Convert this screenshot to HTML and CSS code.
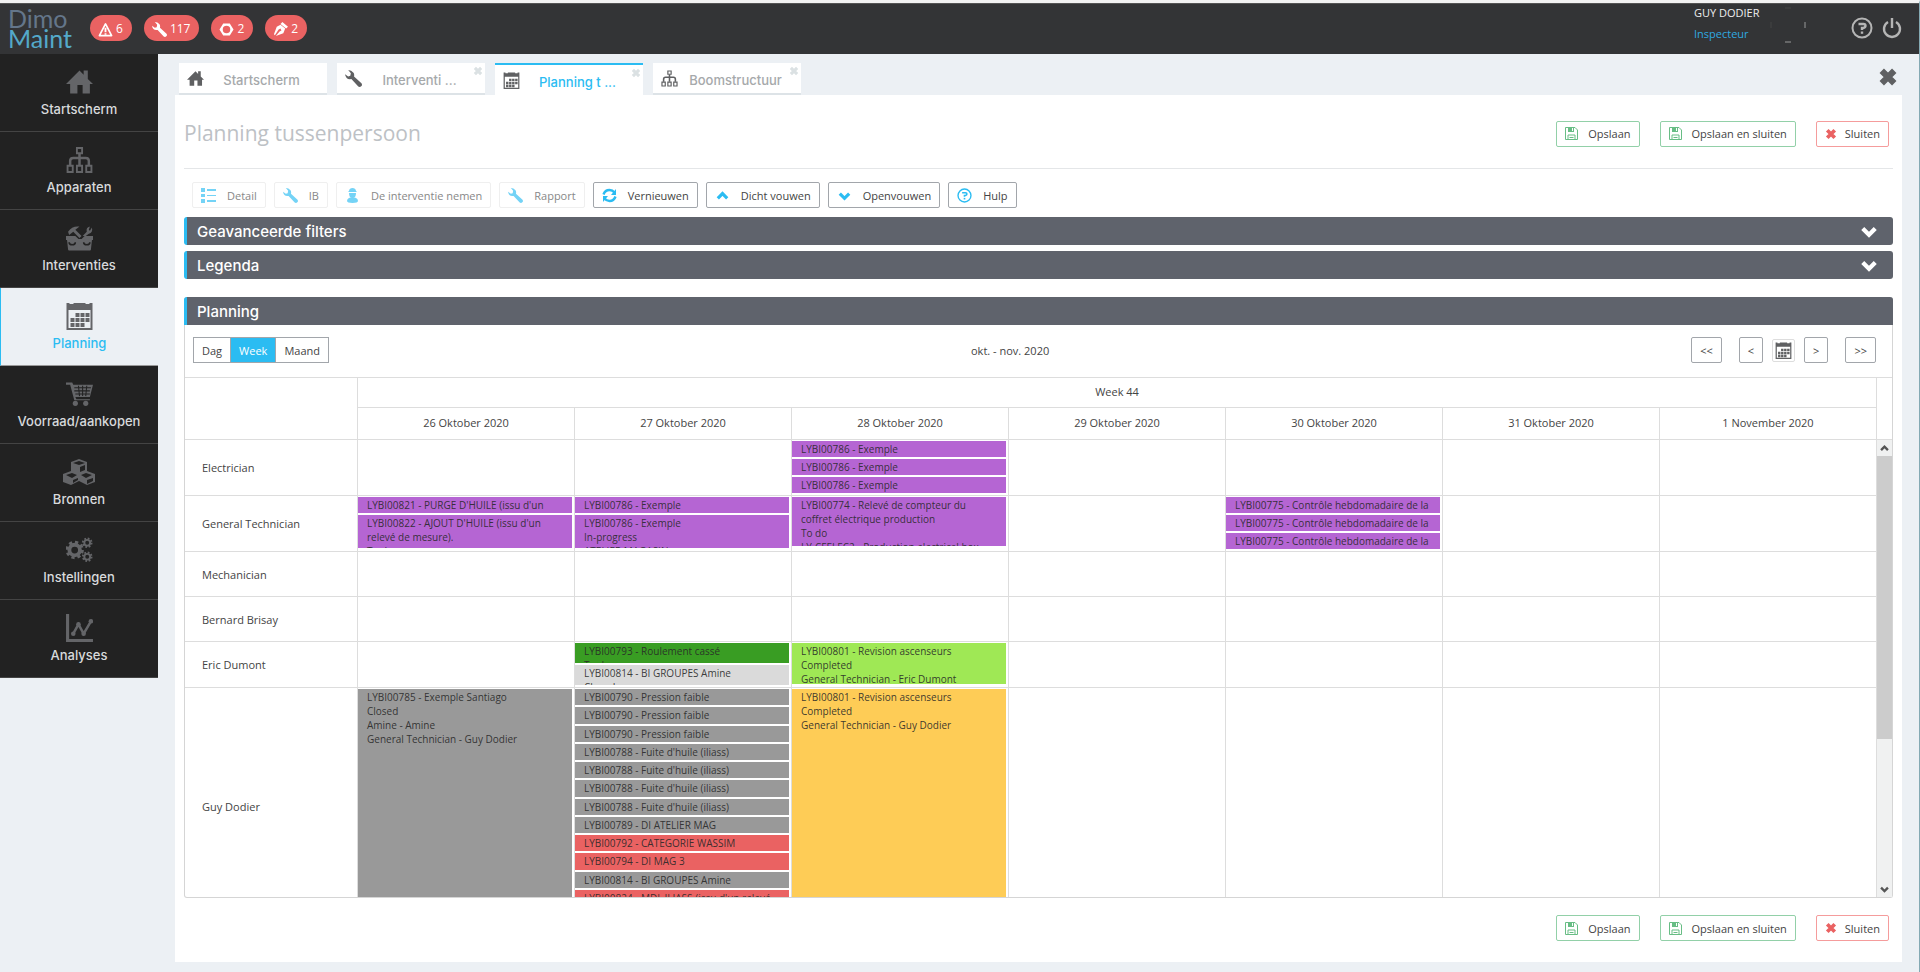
FILE: index.html
```html
<!DOCTYPE html>
<html lang="nl">
<head>
    <meta charset="UTF-8">
    <meta name="viewport" content="width=device-width, initial-scale=1.0">
    <title>DimoMaint - Planning tussenpersoon</title>
    <link rel="stylesheet" href="styles.css">
</head>
<body>

    <!-- Icon set -->
    <svg class="icon-set" aria-hidden="true">
        <symbol id="i-home" viewBox="0 0 26 24"><path d="M13 1 0 14h4v9h7v-8h5v8h7v-9h3l-5-5V1h-4v4z"/></symbol>
        <symbol id="i-tree" viewBox="0 0 26 26"><path d="M13 7v11M4 18v-4q0-3 3-3h12q3 0 3 3v4" fill="none" stroke="currentColor" stroke-width="2.4"/><path d="M10.500 1.500h5v5h-5zM1.500 18.500h5v6h-5zM10.500 18.500h5v6h-5zM19.500 18.500h5v6h-5z" fill="none" stroke="currentColor" stroke-width="1.800"/></symbol>
        <symbol id="i-toolbox" viewBox="0 0 26 24"><path d="M0 10h9l3 3h3l3-3h8v4h-1l-1 9q0 1-1 1H3q-1 0-1-1l-1-9H0z"/><path d="M3 16q0 2.500 3 2.500T9 16M17 16q0 2.500 3 2.500t3-2.500" fill="none" stroke="#222" stroke-width="1.500"/><path d="M2 6q4-6 11-5l-4 3 6 6-2 2-6-6-4 3zM25 2q1 5-3 6l-3 2h-3l4-4q-1-4 3-5l-1 3 1 1z"/></symbol>
        <symbol id="i-calendar" viewBox="0 0 26 28"><path d="M0 1h3v1h4V1h12v1h4V1h3v27H0zM2 8v18h22V8z" fill-rule="evenodd"/><path d="M9 11h4v4H9zM14 11h4v4h-4zM19 11h4v4h-4zM4 16h4v4H4zM9 16h4v4H9zM14 16h4v4h-4zM19 16h4v4h-4zM4 21h4v4H4zM9 21h4v4H9zM14 21h4v4h-4z"/></symbol>
        <symbol id="i-cart" viewBox="0 0 26 24"><path d="M0 1h6l1 2h19l-3 12H9l1 2h13v1H8L4 3H0z"/><path d="M8 6h16M8 9h15M9 12h14M12 4l1 10M16 4v10M20 4l-1 10" stroke="#222" stroke-width="1"/><circle cx="9" cy="21" r="2.500"/><circle cx="19" cy="21" r="2.500"/></symbol>
        <symbol id="i-cubes" viewBox="0 0 32 26"><path d="M16 0 24 3v9l8 3v8l-8 3-8-4-8 4-8-3v-8l8-3V3z"/><path d="m10 4 6-2 6 2-6 2zM3 16l6-2 5 2-5 3zM18 16l5-2 6 2-6 3zM17 8l5-2v5l-5 2zM10 21l5-2v2l-5 3zM24 21l6-2v3l-6 3z" fill="#222"/></symbol>
        <symbol id="i-gears" viewBox="0 0 28 26"><circle cx="9" cy="13" r="5.500" fill="none" stroke="currentColor" stroke-width="4"/><circle cx="9" cy="13" r="8" fill="none" stroke="currentColor" stroke-width="3" stroke-dasharray="3.300 3"/><circle cx="22" cy="5.500" r="3" fill="none" stroke="currentColor" stroke-width="2"/><circle cx="22" cy="5.500" r="4.500" fill="none" stroke="currentColor" stroke-width="2" stroke-dasharray="1.800 1.730"/><circle cx="22" cy="20" r="3" fill="none" stroke="currentColor" stroke-width="2"/><circle cx="22" cy="20" r="4.500" fill="none" stroke="currentColor" stroke-width="2" stroke-dasharray="1.800 1.730"/></symbol>
        <symbol id="i-chart" viewBox="0 0 26 27"><path d="M0 0h3v24h23v3H0z"/><path d="m7 19 5-9 5 9 7-12" fill="none" stroke="currentColor" stroke-width="2.400"/><circle cx="7" cy="19" r="2.200"/><circle cx="12" cy="10" r="2.200"/><circle cx="17" cy="19" r="2.200"/><circle cx="24" cy="7" r="2.200"/></symbol>
        <symbol id="i-warning" viewBox="0 0 16 16"><path d="m8 2 6.500 12.500h-13z" fill="none" stroke="currentColor" stroke-width="1.800" stroke-linejoin="round"/><path d="M7 6h2v5H7zM7 12h2v1.500H7z"/></symbol>
        <symbol id="i-wrench" viewBox="0 0 16 16"><path d="M3 0q3 0 5 2.500 1 1.500.5 3.500l7 6.500q1 1.500 0 2.500-1.500 1.500-3 .500L6 8.500Q1 9.500 0 4l3 2 2-.500L5.500 3z"/></symbol>
        <symbol id="i-nut" viewBox="0 0 16 16"><path d="M4.500 1.500h7L15.500 8l-4 6.500h-7L.5 8zM8 4a4 4 0 1 0 0 8 4 4 0 0 0 0-8z" fill-rule="evenodd"/></symbol>
        <symbol id="i-pen" viewBox="0 0 16 16"><path d="M10 0 16 5l-2 2-6-5zM8 3l5 4-2 5-8 3 4-5 2-1-1-2-2 1-4 6-1-1 3-8z"/></symbol>
        <symbol id="i-help" viewBox="0 0 22 22"><circle cx="11" cy="11" r="9.500" fill="none" stroke="currentColor" stroke-width="2"/><path d="M7.500 7h5q2 0 2 1.700T12 11h-1v2" fill="none" stroke="currentColor" stroke-width="2.400"/><path d="M9.800 14.500h2.400v2.300H9.800z"/></symbol>
        <symbol id="i-power" viewBox="0 0 20 22"><path d="M6 5a8 8 0 1 0 8 0" fill="none" stroke="currentColor" stroke-width="2.400"/><path d="M8.800 1h2.400v10H8.800z"/></symbol>
        <symbol id="i-close" viewBox="0 0 16 16"><path d="m3 3 10 10M13 3 3 13" stroke="currentColor" stroke-width="5"/></symbol>
        <symbol id="i-list" viewBox="0 0 15 15"><path d="M0 0h4v4H0zM0 6h4v3H0zM0 11h4v4H0zM6 1h9v2H6zM6 7h9v1H6zM6 12h9v2H6z"/></symbol>
        <symbol id="i-user" viewBox="0 0 15 15"><path d="M4 3c0-4 7-4 7 0l1 1H3zM4 5h7c0 3-1 5-3.500 5S4 8 4 5z"/><path d="M2 13c0-2 2-3.500 4-3.500h3c2 0 4 1.500 4 3.500 0 1-2 2-5.500 2S2 14 2 13z"/></symbol>
        <symbol id="i-refresh" viewBox="0 0 15 15"><path d="M1.500 6.500Q3 2 7.500 2q3 0 5 2.500M13.500 8.500Q12 13 7.500 13q-3 0-5-2.500" fill="none" stroke="currentColor" stroke-width="2.400"/><path d="M14 1v6H9zM1 14V8h5z"/></symbol>
        <symbol id="i-up" viewBox="0 0 16 16"><path d="m3 11 5-5 5 5" fill="none" stroke="currentColor" stroke-width="3.400"/></symbol>
        <symbol id="i-down" viewBox="0 0 16 16"><path d="m3 6 5 5 5-5" fill="none" stroke="currentColor" stroke-width="3.400"/></symbol>
        <symbol id="i-save" viewBox="0 0 13 13"><path d="M.5.5H10l2.500 2.500v9.500H.5zM3 12.500V8h7v4.500M4.500 10.500h4" fill="none" stroke="currentColor"/><path d="M3 0h6v5H3zm4 1v3h1V1z" fill-rule="evenodd"/></symbol>
    </svg>

    <header class="topbar">
        <a class="logo" href="#"><span class="logo-dimo">Dimo</span><span class="logo-maint">Maint</span></a>
        <div class="badges">
            <a class="badge" href="#"><svg><use href="#i-warning"/></svg>6</a>
            <a class="badge" href="#"><svg><use href="#i-wrench"/></svg>117</a>
            <a class="badge" href="#"><svg><use href="#i-nut"/></svg>2</a>
            <a class="badge" href="#"><svg><use href="#i-pen"/></svg>2</a>
        </div>
        <div class="user">
            <span>GUY DODIER</span>
            <a href="#">Inspecteur</a>
        </div>
        <svg class="avatar" viewBox="0 0 36 36" aria-hidden="true"><path d="M1 15v6M15 1h6" stroke="#444"/><path d="M35 15v6M15 35h6" stroke="#999"/></svg>
        <button class="top-btn" aria-label="Hulp"><svg><use href="#i-help"/></svg></button>
        <button class="top-btn" aria-label="Afmelden"><svg><use href="#i-power"/></svg></button>
    </header>

    <div class="layout">
        <nav class="sidebar">
            <a href="#"><svg><use href="#i-home"/></svg>Startscherm</a>
            <a href="#"><svg><use href="#i-tree"/></svg>Apparaten</a>
            <a href="#"><svg><use href="#i-toolbox"/></svg>Interventies</a>
            <a href="#" class="active"><svg><use href="#i-calendar"/></svg>Planning</a>
            <a href="#"><svg><use href="#i-cart"/></svg>Voorraad/aankopen</a>
            <a href="#"><svg class="wide"><use href="#i-cubes"/></svg>Bronnen</a>
            <a href="#"><svg><use href="#i-gears"/></svg>Instellingen</a>
            <a href="#"><svg><use href="#i-chart"/></svg>Analyses</a>
        </nav>

        <div class="workspace">
            <div class="tabs">
                <div class="tab"><svg><use href="#i-home"/></svg><a href="#">Startscherm</a></div>
                <div class="tab"><svg><use href="#i-wrench"/></svg><a href="#">Interventi ...</a><button class="tab-close" aria-label="Tab sluiten"><svg><use href="#i-close"/></svg></button></div>
                <div class="tab active"><svg><use href="#i-calendar"/></svg><a href="#">Planning t ...</a><button class="tab-close" aria-label="Tab sluiten"><svg><use href="#i-close"/></svg></button></div>
                <div class="tab"><svg><use href="#i-tree"/></svg><a href="#">Boomstructuur</a><button class="tab-close" aria-label="Tab sluiten"><svg><use href="#i-close"/></svg></button></div>
                <button class="close-all" aria-label="Alles sluiten"><svg><use href="#i-close"/></svg></button>
            </div>

            <main class="page">
                <div class="page-head">
                    <h1>Planning tussenpersoon</h1>
                    <div class="actions">
                        <button class="btn save"><svg><use href="#i-save"/></svg>Opslaan</button>
                        <button class="btn save"><svg><use href="#i-save"/></svg>Opslaan en sluiten</button>
                        <button class="btn cancel"><svg><use href="#i-close"/></svg>Sluiten</button>
                    </div>
                </div>

                <div class="toolbar">
                    <button class="btn" disabled><svg><use href="#i-list"/></svg>Detail</button>
                    <button class="btn" disabled><svg><use href="#i-wrench"/></svg>IB</button>
                    <button class="btn" disabled><svg><use href="#i-user"/></svg>De interventie nemen</button>
                    <button class="btn" disabled><svg><use href="#i-wrench"/></svg>Rapport</button>
                    <button class="btn"><svg><use href="#i-refresh"/></svg>Vernieuwen</button>
                    <button class="btn"><svg><use href="#i-up"/></svg>Dicht vouwen</button>
                    <button class="btn"><svg><use href="#i-down"/></svg>Openvouwen</button>
                    <button class="btn"><svg><use href="#i-help"/></svg>Hulp</button>
                </div>

                <button class="panel-title">Geavanceerde filters<svg><use href="#i-down"/></svg></button>
                <button class="panel-title">Legenda<svg><use href="#i-down"/></svg></button>

                <section class="planning">
                    <h2 class="panel-title">Planning</h2>
                    <div class="planning-bar">
                        <div class="views">
                            <button>Dag</button>
                            <button class="active">Week</button>
                            <button>Maand</button>
                        </div>
                        <span class="period">okt. - nov. 2020</span>
                        <div class="nav-dates">
                            <button class="btn first">&lt;&lt;</button>
                            <button class="btn">&lt;</button>
                            <button class="pick" aria-label="Datum kiezen"><svg><use href="#i-calendar"/></svg></button>
                            <button class="btn">&gt;</button>
                            <button class="btn last">&gt;&gt;</button>
                        </div>
                    </div>

                    <div class="schedule-head">
                        <table class="schedule">
                            <colgroup><col class="col-name"><col span="7"></colgroup>
                            <thead>
                                <tr>
                                    <td rowspan="2"></td>
                                    <th colspan="7" scope="colgroup">Week 44</th>
                                </tr>
                                <tr>
                                    <th scope="col">26 Oktober 2020</th>
                                    <th scope="col">27 Oktober 2020</th>
                                    <th scope="col">28 Oktober 2020</th>
                                    <th scope="col">29 Oktober 2020</th>
                                    <th scope="col">30 Oktober 2020</th>
                                    <th scope="col">31 Oktober 2020</th>
                                    <th scope="col">1 November 2020</th>
                                </tr>
                            </thead>
                        </table>
                    </div>

                    <div class="schedule-body">
                        <div class="schedule-view">
                            <table class="schedule">
                                <colgroup><col class="col-name"><col span="7"></colgroup>
                                <tbody>
                                    <tr class="row-large">
                                        <th scope="row">Electrician</th>
                                        <td></td>
                                        <td></td>
                                        <td>
                                            <div class="event purple">LYBI00786 - Exemple</div>
                                            <div class="event purple">LYBI00786 - Exemple</div>
                                            <div class="event purple">LYBI00786 - Exemple</div>
                                        </td>
                                        <td></td>
                                        <td></td>
                                        <td></td>
                                        <td></td>
                                    </tr>
                                    <tr class="row-large">
                                        <th scope="row">General Technician</th>
                                        <td>
                                            <div class="event purple">LYBI00821 - PURGE D'HUILE (issu d'un</div>
                                            <div class="event purple double">LYBI00822 - AJOUT D'HUILE (issu d'un<br>relevé de mesure).<br>To do</div>
                                        </td>
                                        <td>
                                            <div class="event purple">LYBI00786 - Exemple</div>
                                            <div class="event purple double">LYBI00786 - Exemple<br>In-progress<br>ATELIER MAGASIN</div>
                                        </td>
                                        <td>
                                            <div class="event purple triple">LYBI00774 - Relevé de compteur du<br>coffret électrique production<br>To do<br>LY-CFELEC2 - Production electrical box</div>
                                        </td>
                                        <td></td>
                                        <td>
                                            <div class="event purple">LYBI00775 - Contrôle hebdomadaire de la</div>
                                            <div class="event purple">LYBI00775 - Contrôle hebdomadaire de la</div>
                                            <div class="event purple">LYBI00775 - Contrôle hebdomadaire de la</div>
                                        </td>
                                        <td></td>
                                        <td></td>
                                    </tr>
                                    <tr>
                                        <th scope="row">Mechanician</th>
                                        <td></td><td></td><td></td><td></td><td></td><td></td><td></td>
                                    </tr>
                                    <tr>
                                        <th scope="row">Bernard Brisay</th>
                                        <td></td><td></td><td></td><td></td><td></td><td></td><td></td>
                                    </tr>
                                    <tr>
                                        <th scope="row">Eric Dumont</th>
                                        <td></td>
                                        <td>
                                            <div class="event green half">LYBI00793 - Roulement cassé<br>To do</div>
                                            <div class="event light half">LYBI00814 - BI GROUPES Amine<br>Closed</div>
                                        </td>
                                        <td>
                                            <div class="event lime whole">LYBI00801 - Revision ascenseurs<br>Completed<br>General Technician - Eric Dumont</div>
                                        </td>
                                        <td></td>
                                        <td></td>
                                        <td></td>
                                        <td></td>
                                    </tr>
                                    <tr class="row-full">
                                        <th scope="row">Guy Dodier</th>
                                        <td>
                                            <div class="event grey full">LYBI00785 - Exemple Santiago<br>Closed<br>Amine - Amine<br>General Technician - Guy Dodier</div>
                                        </td>
                                        <td>
                                            <div class="stack">
                                                <div class="event grey">LYBI00790 - Pression faible</div>
                                                <div class="event grey">LYBI00790 - Pression faible</div>
                                                <div class="event grey">LYBI00790 - Pression faible</div>
                                                <div class="event grey">LYBI00788 - Fuite d'huile (iliass)</div>
                                                <div class="event grey">LYBI00788 - Fuite d'huile (iliass)</div>
                                                <div class="event grey">LYBI00788 - Fuite d'huile (iliass)</div>
                                                <div class="event grey">LYBI00788 - Fuite d'huile (iliass)</div>
                                                <div class="event grey">LYBI00789 - DI ATELIER MAG</div>
                                                <div class="event red">LYBI00792 - CATEGORIE WASSIM</div>
                                                <div class="event red">LYBI00794 - DI MAG 3</div>
                                                <div class="event grey">LYBI00814 - BI GROUPES Amine</div>
                                                <div class="event red">LYBI00824 - MDI_ILIASS (issu d'un relevé</div>
                                            </div>
                                        </td>
                                        <td>
                                            <div class="event orange full">LYBI00801 - Revision ascenseurs<br>Completed<br>General Technician - Guy Dodier</div>
                                        </td>
                                        <td></td>
                                        <td></td>
                                        <td></td>
                                        <td></td>
                                    </tr>
                                </tbody>
                            </table>
                        </div>
                        <div class="scrollbar" aria-hidden="true">
                            <svg><use href="#i-up"/></svg>
                            <div class="scroll-thumb"></div>
                            <svg><use href="#i-down"/></svg>
                        </div>
                    </div>
                </section>

                <div class="actions page-foot">
                    <button class="btn save"><svg><use href="#i-save"/></svg>Opslaan</button>
                    <button class="btn save"><svg><use href="#i-save"/></svg>Opslaan en sluiten</button>
                    <button class="btn cancel"><svg><use href="#i-close"/></svg>Sluiten</button>
                </div>
            </main>
        </div>
    </div>

</body>
</html>
```

FILE: styles.css
```css
* {
    box-sizing: border-box;
}
body {
    margin: 0;
    height: 100vh;
    display: flex;
    flex-direction: column;
    background: #ecf0f4;
    border-top: 3px solid #f2f2f2;
    border-right: 1px solid #84a9b3;
    color: #444;
    font-family: "Open Sans", "Noto Sans", sans-serif;
    font-size: 11px;
}
a {
    color: inherit;
    text-decoration: none;
}
button {
    font: inherit;
    color: inherit;
    cursor: pointer;
}
svg {
    fill: currentColor;
    flex: none;
}
.icon-set {
    display: none;
}

/* Top bar */
.topbar {
    display: flex;
    flex: none;
    height: 51px;
    padding: 0 16px 0 8px;
    background: #333436;
    border-top: 1px solid #555;
}
.logo {
    display: flex;
    flex-direction: column;
    width: 82px;
    padding-top: 4px;
    font-family: Lato, sans-serif;
    font-size: 25px;
    line-height: 20px;
}
.logo-dimo {
    color: #64768a;
}
.logo-maint {
    color: #54a9c9;
}
.badges {
    display: flex;
    gap: 12px;
    padding-top: 11px;
}
.badge {
    display: flex;
    align-items: center;
    gap: 3px;
    height: 26px;
    padding: 0 9px 0 8px;
    border-radius: 13px;
    background: #ea6262;
    color: #fff;
    font-size: 12px;
}
.badge svg {
    width: 15px;
    height: 15px;
    margin-top: 3px;
}
.user {
    display: flex;
    flex-direction: column;
    gap: 5px;
    width: 76px;
    margin-left: auto;
    padding-top: 1px;
    color: #eee;
    line-height: 16px;
}
.user a {
    color: #2fa9e0;
}
.avatar {
    width: 36px;
    height: 36px;
    margin: 3px 45px 0 0;
}
.top-btn {
    width: 22px;
    height: 22px;
    margin: 13px 0 0;
    padding: 0;
    border: 0;
    background: none;
    color: #b5b5b5;
}
.top-btn + .top-btn {
    margin-left: 8px;
}
.top-btn svg {
    width: 22px;
    height: 22px;
}

.layout {
    display: flex;
    flex: 1;
    min-height: 0;
}

/* Main menu */
.sidebar {
    width: 158px;
    flex: none;
    font-family: Inter, sans-serif;
    font-size: 13px;
    font-weight: 500;
}
.sidebar a {
    display: flex;
    flex-direction: column;
    align-items: center;
    gap: 5px;
    height: 78px;
    padding-top: 14px;
    background: #222;
    border-bottom: 1px solid #444;
    color: #d8dadc;
    line-height: 16px;
}
.sidebar svg {
    width: 27px;
    height: 28px;
    color: #646568;
}
.sidebar svg.wide {
    width: 32px;
}
.sidebar a.active {
    background: #ecf0f4;
    border-left: 1px solid #2bbcf2;
    border-bottom-color: #999;
    color: #2bbcf2;
}

/* Tabs */
.workspace {
    display: flex;
    flex: 1;
    flex-direction: column;
    min-width: 0;
    padding: 9px 17px 10px;
}
.tabs {
    display: flex;
    gap: 10px;
    height: 32px;
    flex: none;
    padding: 0 4px;
}
.tab {
    position: relative;
    display: flex;
    align-items: center;
    width: 148px;
    padding: 0 8px;
    background: #fff;
    border-bottom: 2px solid #dde3e7;
    color: #a6a9ab;
    font-family: Inter, sans-serif;
    font-size: 13px;
    font-weight: 500;
}
.tab > svg {
    width: 17px;
    height: 17px;
    color: #5f6062;
}
.tab a {
    flex: 1;
    padding-top: 4px;
    text-align: center;
}
.tab.active {
    border-top: 2px solid #2bbcf2;
    border-bottom: 0;
    color: #2bbcf2;
}
.tab-close {
    position: absolute;
    top: 3px;
    right: 2px;
    padding: 0;
    border: 0;
    background: none;
    color: #dbe1e3;
    line-height: 0;
}
.tab-close svg {
    width: 10px;
    height: 10px;
}
.close-all {
    margin-left: auto;
    padding: 0 0 4px;
    border: 0;
    background: none;
    color: #5f6062;
    line-height: 0;
}
.close-all svg {
    width: 20px;
    height: 20px;
}

/* Page */
.page {
    display: flex;
    flex: 1;
    flex-direction: column;
    min-height: 0;
    padding: 0 9px 21px;
    background: #fff;
}
.page-head {
    display: flex;
    align-items: center;
    justify-content: space-between;
    height: 74px;
    flex: none;
    border-bottom: 1px solid #e4e6e8;
}
h1 {
    margin: 0;
    padding-top: 2px;
    color: #bdc1c5;
    font-size: 21px;
    font-weight: 400;
}
.actions {
    display: flex;
    justify-content: flex-end;
    gap: 20px;
    padding: 4px 4px 0 0;
}
.page-foot {
    padding-top: 17px;
}
.btn {
    display: flex;
    align-items: center;
    gap: 11px;
    height: 26px;
    padding: 0 8px;
    border: 1px solid #a2a6ab;
    border-radius: 2px;
    background: #fff;
}
.btn svg {
    width: 15px;
    height: 15px;
    color: #2bbcf2;
}
.btn:disabled {
    border-color: #efefef;
    color: #888;
}
.btn:disabled svg {
    opacity: 0.65;
}
.btn.save,
.btn.cancel {
    gap: 10px;
    border-color: #92d0a8;
}
.btn.save svg {
    width: 13px;
    height: 13px;
    color: #68bd85;
}
.btn.cancel {
    gap: 8px;
    border-color: #f59c9c;
}
.btn.cancel svg {
    width: 12px;
    height: 12px;
    color: #ea6262;
}
.toolbar {
    display: flex;
    gap: 8px;
    flex: none;
    padding: 13px 8px 9px;
}
.panel-title {
    display: flex;
    align-items: center;
    justify-content: space-between;
    height: 28px;
    flex: none;
    margin: 0 0 6px;
    padding: 0 14px 0 10px;
    border: 0;
    border-left: 3px solid #2bbcf2;
    border-radius: 3px;
    background: #5f636c;
    color: #fff;
    font-family: Inter, sans-serif;
    font-size: 15px;
    font-weight: 500;
}
.panel-title svg {
    width: 20px;
    height: 20px;
}

/* Planning */
.planning {
    display: flex;
    flex: 1;
    flex-direction: column;
    min-height: 0;
    margin-top: 12px;
    border: 1px solid #d5d5d5;
    border-top: 0;
    border-radius: 3px;
}
.planning .panel-title {
    margin: 0 -1px;
    border-radius: 3px 3px 0 0;
}
.planning-bar {
    display: flex;
    align-items: center;
    justify-content: space-between;
    height: 52px;
    flex: none;
    padding: 0 16px 2px 8px;
}
.views {
    display: flex;
}
.views button {
    height: 26px;
    padding: 0 8px;
    border: 1px solid #a2a6ab;
    background: #fff;
}
.views button + button {
    border-left: 0;
}
.views button.active {
    background: #2bbcf2;
    color: #fff;
}
.nav-dates {
    display: flex;
    align-items: center;
    gap: 9px;
}
.nav-dates .first {
    margin-right: 8px;
}
.nav-dates .last {
    margin-left: 8px;
}
.pick {
    width: 23px;
    height: 23px;
    padding: 2px;
    border: 1px solid #ddd;
    border-radius: 2px;
    background: #fff;
    color: #5f6062;
    line-height: 0;
}
.pick svg {
    width: 17px;
    height: 17px;
}
.schedule-head {
    flex: none;
    padding-right: 15px;
    border-top: 1px solid #ddd;
    border-bottom: 1px solid #ddd;
}
.schedule {
    width: 100%;
    table-layout: fixed;
    border-collapse: separate;
    border-spacing: 0;
}
.col-name {
    width: 173px;
}
.schedule th,
.schedule td {
    padding: 0;
    border-right: 1px solid #ddd;
    font-weight: 400;
}
.schedule thead th {
    height: 31px;
    padding-bottom: 2px;
}
.schedule thead tr:first-child th {
    height: 30px;
    border-bottom: 1px solid #ddd;
}
.schedule-body {
    display: flex;
    flex: 1;
    min-height: 0;
}
.schedule-view {
    flex: 1;
    overflow: hidden;
}
.schedule tbody th {
    padding-left: 17px;
    border-bottom: 1px solid #ddd;
    text-align: left;
}
.schedule tbody td {
    height: 45px;
    padding: 1px 2px 0 0;
    border-bottom: 1px solid #ddd;
    vertical-align: top;
}
.schedule .row-large td {
    height: 56px;
}
.schedule .row-full td {
    height: 237px;
}
.event {
    height: 16px;
    margin-bottom: 2px;
    padding: 1px 0 0 9px;
    overflow: hidden;
    color: rgba(40, 40, 40, 0.9);
    font-size: 10px;
    line-height: 14px;
    white-space: nowrap;
}
.event.half {
    height: 20px;
}
.event.double {
    height: 33px;
}
.event.whole {
    height: 41px;
}
.event.triple {
    height: 49px;
}
.event.full {
    height: 234px;
}
.stack {
    display: flex;
    flex-direction: column;
    gap: 2px;
    height: 217px;
}
.stack .event {
    flex: 1;
    margin: 0;
}
.purple {
    background: #b565d3;
}
.green {
    background: #399d23;
}
.light {
    background: #dadada;
}
.lime {
    background: #9fe855;
}
.grey {
    background: #999;
}
.red {
    background: #ea6262;
}
.orange {
    background: #fecc56;
}
.scrollbar {
    display: flex;
    flex-direction: column;
    width: 15px;
    flex: none;
    background: #f0f1f1;
}
.scrollbar svg {
    width: 15px;
    height: 16px;
    padding: 2px;
    color: #555;
}
.scroll-thumb {
    height: 62%;
    margin-bottom: auto;
    background: #ccc;
}
```
